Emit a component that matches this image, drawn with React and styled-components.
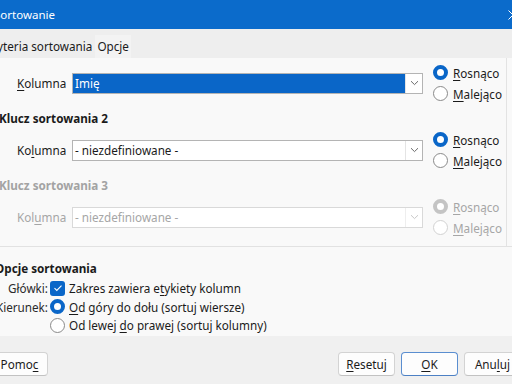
import React from 'react';
import styled, { createGlobalStyle } from 'styled-components';

const Global = createGlobalStyle`
  html, body { margin: 0; padding: 0; }
  body {
    width: 512px; height: 384px; overflow: hidden; background: #f0f0f0;
    font-family: "Noto Sans", "Open Sans", sans-serif; font-size: 11.7px; color: #1b1b1b;
  }
  #root { width: 512px; height: 384px; overflow: hidden; }
  * { box-sizing: border-box; }
`;

const Dialog = styled.div`
  width: 552px;
  height: 384px;
  margin-left: -20px;
  display: flex;
  flex-direction: column;
  background: #f9f9f9;
`;

const TitleBar = styled.div`
  flex: none;
  height: 29px;
  background: #0b6bcb;
  color: #fff;
  display: flex;
  align-items: center;
  justify-content: space-between;
  padding-left: 14px;
`;

const Title = styled.span`
  font-size: 11.5px;
  line-height: 1;
`;

const CloseBox = styled.div`
  width: 24px;
  height: 29px;
  display: flex;
  align-items: center;
`;

const TabBar = styled.div`
  flex: none;
  height: 29px;
  background: #eeeeee;
  display: flex;
  align-items: stretch;
  gap: 1px;
  padding: 6px 0 0 3px;
`;

const Tab = styled.div`
  display: flex;
  align-items: center;
  padding: 0 2px 1px;
  background: ${p => (p.$active ? '#eeeeee' : '#f3f3f3')};
  color: #1b1b1b;
`;

const Body = styled.div`
  flex: 1;
  display: flex;
  flex-direction: column;
  background: #f9f9f9;
`;

const TabPage = styled.div`
  margin-right: 25px;
  border-right: 1px solid #e3e3e3;
  padding: 4px 0 8px;
`;

const Divider = styled.div`
  height: 1px;
  background: #e2e2e2;
`;

const KeyBlock = styled.div`
  display: grid;
  grid-template-columns: 45px 351px auto;
  column-gap: 10px;
  align-items: center;
  height: 42px;
  padding-left: 37px;
`;

const FieldLabel = styled.span`
  color: ${p => (p.$disabled ? '#a6a6a6' : '#1b1b1b')};
`;

const SectionTitle = styled.div`
  height: 18px;
  line-height: 18px;
  margin: 5px 0 2px;
  padding-left: 19px;
  font-weight: 700;
  color: ${p => (p.$disabled ? '#a3a3a3' : '#1b1b1b')};
`;

const Combo = styled.div`
  height: 21px;
  display: flex;
  border: 1px solid ${p => (p.$disabled ? '#d9d9d9' : '#b4b4b4')};
  background: #fff;
`;

const ComboValue = styled.div`
  flex: 1;
  display: flex;
  align-items: center;
  padding-left: 2px;
  background: ${p => (p.$selected ? '#0a66c8' : '#fff')};
  color: ${p => (p.$selected ? '#fff' : p.$disabled ? '#a6a6a6' : '#1b1b1b')};
`;

const ComboButton = styled.div`
  width: 17px;
  flex: none;
  display: flex;
  align-items: center;
  justify-content: center;
  border-left: 1px solid ${p => (p.$disabled ? '#eeeeee' : '#e4e4e4')};
  background: #fff;
`;

const RadioGroup = styled.div`
  display: flex;
  flex-direction: column;
`;

const ChoiceRow = styled.label`
  height: ${p => p.$h || 21}px;
  display: flex;
  align-items: center;
  gap: ${p => p.$gap || 5}px;
  color: ${p => (p.$disabled ? '#a6a6a6' : '#1b1b1b')};
  white-space: nowrap;
`;

const RadioDot = styled.span`
  flex: none;
  width: 15px;
  height: 15px;
  border-radius: 50%;
  background: #fff;
  border: ${p =>
    p.$checked
      ? `4.5px solid ${p.$disabled ? '#c4c4c4' : '#0a66c8'}`
      : `1px solid ${p.$disabled ? '#d2d2d2' : '#8a8a8a'}`};
`;

const CheckBox = styled.span`
  flex: none;
  width: 15px;
  height: 15px;
  border-radius: 3px;
  background: #0a66c8;
  display: flex;
  align-items: center;
  justify-content: center;
`;

const Mn = styled.span`
  text-decoration: underline;
  text-underline-offset: 2px;
`;

const Options = styled.div`
  padding: 12px 0 0 15px;
`;

const OptionsTitle = styled.div`
  height: 18px;
  line-height: 18px;
  margin-bottom: 2px;
  font-weight: 700;
`;

const OptionsGrid = styled.div`
  display: grid;
  grid-template-columns: 53px auto;
  grid-auto-rows: 18.5px;
  column-gap: 2px;
  align-items: center;
`;

const OptLabel = styled.span`
  text-align: right;
  color: #2b2b2b;
`;

const Footer = styled.div`
  flex: none;
  height: 48px;
  background: #f0f0f0;
  display: flex;
  align-items: flex-start;
  gap: 6px;
  padding: 16px 11px 0 11px;
`;

const Button = styled.button`
  width: 57px;
  height: 24px;
  margin-right: ${p => (p.$pushLeft ? 'auto' : '0')};
  border: 1px solid ${p => (p.$primary ? '#5a8ed0' : '#d3d3d3')};
  border-bottom-color: ${p => (p.$primary ? '#4c80c4' : '#c2c2c2')};
  border-radius: 4px;
  background: #fdfdfd;
  font-family: inherit;
  font-size: 11.7px;
  color: #1b1b1b;
  padding: 0;
`;

const Chevron = ({ disabled }) => (
  <svg width="9" height="6" viewBox="0 0 9 6">
    <path d="M1 1.2 L4.5 4.6 L8 1.2" fill="none" stroke={disabled ? '#c8c8c8' : '#6a6a6a'} strokeWidth="1" />
  </svg>
);

const KeyRow = ({ label, value, selected, disabled }) => (
  <KeyBlock>
    <FieldLabel $disabled={disabled}>{label}</FieldLabel>
    <Combo $disabled={disabled}>
      <ComboValue $selected={selected} $disabled={disabled}>{value}</ComboValue>
      <ComboButton $disabled={disabled}><Chevron disabled={disabled} /></ComboButton>
    </Combo>
    <RadioGroup>
      <ChoiceRow $disabled={disabled}>
        <RadioDot $checked $disabled={disabled} />
        <span><Mn>R</Mn>osnąco</span>
      </ChoiceRow>
      <ChoiceRow $disabled={disabled}>
        <RadioDot $disabled={disabled} />
        <span><Mn>M</Mn>alejąco</span>
      </ChoiceRow>
    </RadioGroup>
  </KeyBlock>
);

export default function App() {
  return (
    <>
      <Global />
      <Dialog>
        <TitleBar>
          <Title>Sortowanie</Title>
          <CloseBox>
            <svg width="10" height="10" viewBox="0 0 10 10">
              <path d="M0.5 0.5 L9.5 9.5 M9.5 0.5 L0.5 9.5" stroke="#fff" strokeWidth="1" />
            </svg>
          </CloseBox>
        </TitleBar>
        <TabBar>
          <Tab $active>Kryteria sortowania</Tab>
          <Tab>Opcje</Tab>
        </TabBar>
        <Body>
          <TabPage>
            <KeyRow label={<><Mn>K</Mn>olumna</>} value="Imię" selected />
            <SectionTitle>Klucz sortowania 2</SectionTitle>
            <KeyRow label={<>Ko<Mn>l</Mn>umna</>} value="- niezdefiniowane -" />
            <SectionTitle $disabled>Klucz sortowania 3</SectionTitle>
            <KeyRow label={<>Kol<Mn>u</Mn>mna</>} value="- niezdefiniowane -" disabled />
          </TabPage>
          <Divider />
          <Options>
            <OptionsTitle>Opcje sortowania</OptionsTitle>
            <OptionsGrid>
              <OptLabel>Główki:</OptLabel>
              <ChoiceRow $h={18.5} $gap={4}>
                <CheckBox>
                  <svg width="10" height="8" viewBox="0 0 10 8">
                    <path d="M1.5 4.2 L3.8 6.4 L8.5 1.6" fill="none" stroke="#fff" strokeWidth="1.1" />
                  </svg>
                </CheckBox>
                <span>Zakres zawiera e<Mn>t</Mn>ykiety kolumn</span>
              </ChoiceRow>
              <OptLabel>Kierunek:</OptLabel>
              <ChoiceRow $h={18.5} $gap={4}>
                <RadioDot $checked />
                <span><Mn>O</Mn>d góry do dołu (sortuj wiersze)</span>
              </ChoiceRow>
              <span />
              <ChoiceRow $h={18.5} $gap={4}>
                <RadioDot />
                <span>Od lewej <Mn>d</Mn>o prawej (sortuj kolumny)</span>
              </ChoiceRow>
            </OptionsGrid>
          </Options>
        </Body>
        <Footer>
          <Button $pushLeft>Pomo<Mn>c</Mn></Button>
          <Button><Mn>R</Mn>esetuj</Button>
          <Button $primary><Mn>O</Mn>K</Button>
          <Button>Anu<Mn>l</Mn>uj</Button>
        </Footer>
      </Dialog>
    </>
  );
}
